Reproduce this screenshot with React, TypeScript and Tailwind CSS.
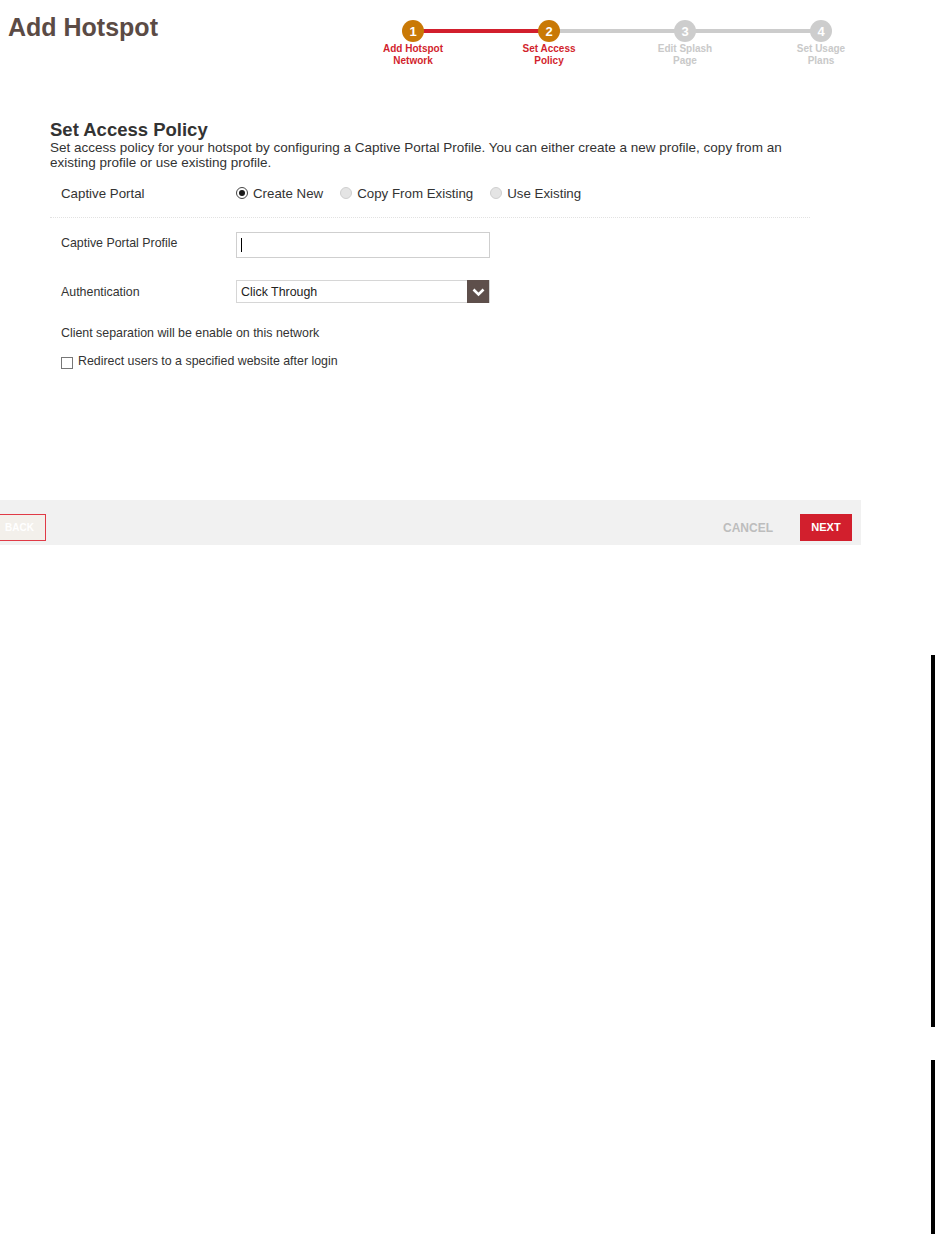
import React from "react";

const steps = [
  { n: "1", l1: "Add Hotspot", l2: "Network", state: "done" },
  { n: "2", l1: "Set Access", l2: "Policy", state: "done" },
  { n: "3", l1: "Edit Splash", l2: "Page", state: "todo" },
  { n: "4", l1: "Set Usage", l2: "Plans", state: "todo" },
];

function Stepper() {
  return (
    <div className="relative mt-[20px] flex h-fit gap-[56px]">
      <div className="absolute left-[40px] top-[9px] h-[4px] w-[136px] bg-[#d21f2d]" />
      <div className="absolute left-[176px] top-[9px] h-[4px] w-[272px] bg-[#cccccc]" />
      {steps.map((s) => (
        <div key={s.n} className="relative z-10 flex w-[80px] flex-col items-center">
          <div
            className={
              s.state === "done"
                ? "flex h-[22px] w-[22px] items-center justify-center rounded-full bg-[#c97906] text-[13px] font-bold leading-none text-white"
                : "flex h-[22px] w-[22px] items-center justify-center rounded-full bg-[#cdcdcd] text-[13px] font-bold leading-none text-white"
            }
          >
            {s.n}
          </div>
          <div
            className={
              s.state === "done"
                ? "mt-[1px] text-center text-[10px] font-bold leading-[12px] text-[#d21f2d]"
                : "mt-[1px] text-center text-[10px] font-bold leading-[12px] text-[#c9c9c9]"
            }
          >
            <div>{s.l1}</div>
            <div>{s.l2}</div>
          </div>
        </div>
      ))}
    </div>
  );
}

function Radio({ checked, label }: { checked?: boolean; label: string }) {
  return (
    <label className="flex items-center gap-[5px]">
      {checked ? (
        <span className="flex h-[12px] w-[12px] items-center justify-center rounded-full border border-[#444] bg-white">
          <span className="h-[6px] w-[6px] rounded-full bg-[#1a1a1a]" />
        </span>
      ) : (
        <span className="h-[12px] w-[12px] rounded-full border border-[#cfcfcf] bg-[#e4e4e4]" />
      )}
      <span className="text-[13.3px] leading-[15px] text-[#333]">{label}</span>
    </label>
  );
}

export default function App() {
  return (
    <div className="relative h-[1234px] w-[935px] overflow-hidden bg-white font-['Liberation_Sans',Arial,sans-serif] text-[#333]">
      <header className="flex h-[75px] w-[861px] justify-between">
        <h1 className="ml-[8px] mt-[12px] text-[25px] font-bold leading-[30px] text-[#5b4b45]">
          Add Hotspot
        </h1>
        <Stepper />
      </header>

      <section className="ml-[50px] w-[760px]">
        <h2 className="mt-[45px] text-[18.5px] font-bold leading-[20px] text-[#333]">
          Set Access Policy
        </h2>
        <p className="text-[13.5px] leading-[15px] text-[#333]">
          Set access policy for your hotspot by configuring a Captive Portal Profile. You can either create a new
          profile, copy from an existing profile or use existing profile.
        </p>

        <div className="border-b border-dotted border-[#e2e2e2] pb-[9px] pt-[8px]">
          <div className="flex h-[30px] items-center pl-[11px]">
            <div className="w-[175px] text-[13.3px] leading-[15px]">Captive Portal</div>
            <div className="flex items-center gap-[17px]">
              <Radio checked label="Create New" />
              <Radio label="Copy From Existing" />
              <Radio label="Use Existing" />
            </div>
          </div>
        </div>

        <div className="mt-[14px] flex items-start pl-[11px]">
          <div className="w-[175px] pt-[4px] text-[12.4px] leading-[14px]">Captive Portal Profile</div>
          <div className="flex h-[26px] w-[254px] items-center border border-[#cfcfcf] bg-white pl-[4px]">
            <span className="h-[14px] w-[1px] bg-black" />
          </div>
        </div>

        <div className="mt-[22px] flex items-center pl-[11px]">
          <div className="w-[175px] text-[12.4px] leading-[14px]">Authentication</div>
          <div className="flex h-[23px] w-[254px] items-center border border-[#d6d6d6] bg-white">
            <span className="flex-1 pl-[4px] text-[12.4px] leading-[14px] text-[#222]">Click Through</span>
            <span className="flex h-[23px] w-[22px] items-center justify-center bg-[#5e4f4b]">
              <svg width="13" height="10" viewBox="0 0 13 10">
                <path d="M1.5 2.5 L6.5 7.5 L11.5 2.5" fill="none" stroke="#fff" strokeWidth="2.6" />
              </svg>
            </span>
          </div>
        </div>

        <p className="mt-[23px] pl-[11px] text-[12.4px] leading-[14px]">
          Client separation will be enable on this network
        </p>

        <label className="mt-[14px] flex items-start gap-[5px] pl-[11px]">
          <span className="mt-[3px] h-[12px] w-[12px] border border-[#777] bg-white" />
          <span className="text-[12.4px] leading-[14px]">Redirect users to a specified website after login</span>
        </label>
      </section>

      <footer className="mt-[131px] flex h-[45px] w-[861px] items-start bg-[#f1f1f1] pt-[14px]">
        <div className="flex h-[27px] w-[46px] items-center border-y border-r border-solid border-[#e03a46] bg-[#f3f0eb] pl-[5px] text-[10px] font-bold text-white">
          BACK
        </div>
        <div className="ml-auto flex h-[27px] items-center text-[12px] font-bold text-[#bdbdbd]">CANCEL</div>
        <div className="ml-[27px] mr-[9px] flex h-[27px] w-[52px] items-center justify-center bg-[#d21f2d] text-[11px] font-bold text-white">
          NEXT
        </div>
      </footer>

      <div className="absolute right-0 top-[655px] h-[372px] w-[4px] bg-black" />
      <div className="absolute bottom-0 right-0 top-[1060px] w-[4px] bg-black" />
    </div>
  );
}
